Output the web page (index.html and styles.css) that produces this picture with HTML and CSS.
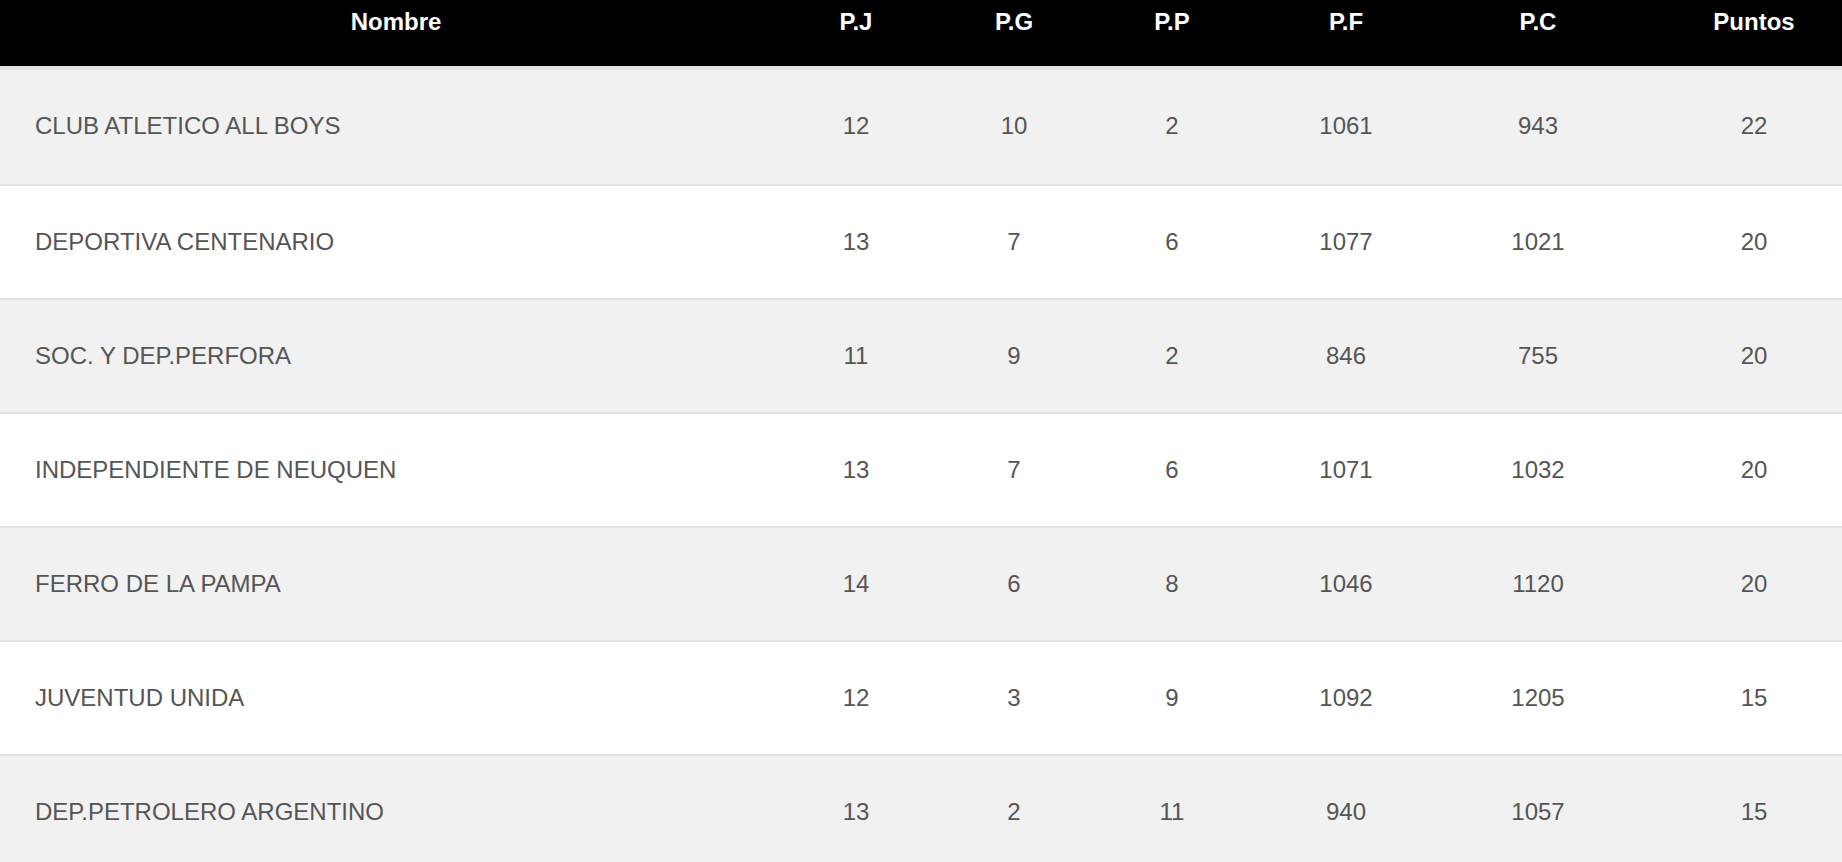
FILE: index.html
```html
<!DOCTYPE html>
<html lang="es">
<head>
<meta charset="utf-8">
<title>Posiciones</title>
<link rel="stylesheet" href="styles.css">
</head>
<body>
<table class="standings">
  <colgroup>
    <col class="c-name">
    <col class="c-pj">
    <col class="c-pg">
    <col class="c-pp">
    <col class="c-pf">
    <col class="c-pc">
    <col class="c-pts">
  </colgroup>
  <thead>
    <tr>
      <th class="th-name">Nombre</th>
      <th>P.J</th>
      <th>P.G</th>
      <th>P.P</th>
      <th>P.F</th>
      <th>P.C</th>
      <th>Puntos</th>
    </tr>
  </thead>
  <tbody>
    <tr><td class="name">CLUB ATLETICO ALL BOYS</td><td>12</td><td>10</td><td>2</td><td>1061</td><td>943</td><td>22</td></tr>
    <tr><td class="name">DEPORTIVA CENTENARIO</td><td>13</td><td>7</td><td>6</td><td>1077</td><td>1021</td><td>20</td></tr>
    <tr><td class="name">SOC. Y DEP.PERFORA</td><td>11</td><td>9</td><td>2</td><td>846</td><td>755</td><td>20</td></tr>
    <tr><td class="name">INDEPENDIENTE DE NEUQUEN</td><td>13</td><td>7</td><td>6</td><td>1071</td><td>1032</td><td>20</td></tr>
    <tr><td class="name">FERRO DE LA PAMPA</td><td>14</td><td>6</td><td>8</td><td>1046</td><td>1120</td><td>20</td></tr>
    <tr><td class="name">JUVENTUD UNIDA</td><td>12</td><td>3</td><td>9</td><td>1092</td><td>1205</td><td>15</td></tr>
    <tr><td class="name">DEP.PETROLERO ARGENTINO</td><td>13</td><td>2</td><td>11</td><td>940</td><td>1057</td><td>15</td></tr>
  </tbody>
</table>
</body>
</html>
```

FILE: styles.css
```css
html, body {
  margin: 0;
  padding: 0;
  background: #ffffff;
  overflow: hidden;
}

body {
  font-family: "Liberation Sans", Arial, Helvetica, sans-serif;
}

.standings {
  width: 1842px;
  table-layout: fixed;
  border-collapse: separate;
  border-spacing: 0;
  font-size: 24px;
  line-height: 28px;
}

.c-name { width: 746px; }
.c-pj   { width: 220px; }
.c-pg   { width: 96px; }
.c-pp   { width: 220px; }
.c-pf   { width: 128px; }
.c-pc   { width: 256px; }
.c-pts  { width: 176px; }

.standings th {
  background: #000000;
  color: #ffffff;
  font-weight: bold;
  text-align: center;
  padding: 8px 0 30px;
  border-bottom: 4px solid #e0e2e6;
}

.standings .th-name {
  padding-left: 46px;
}

.standings td {
  color: #555555;
  text-align: center;
  padding: 42px 0 42px;
  border-bottom: 2px solid #e0e2e6;
  white-space: nowrap;
}

.standings tbody tr:first-child td {
  padding-bottom: 44px;
}

.standings tbody tr:nth-child(odd) td {
  background: #f1f1f1;
}

.standings tbody tr:nth-child(even) td {
  background: #ffffff;
}

.standings td.name {
  text-align: left;
  padding-left: 35px;
}
```
